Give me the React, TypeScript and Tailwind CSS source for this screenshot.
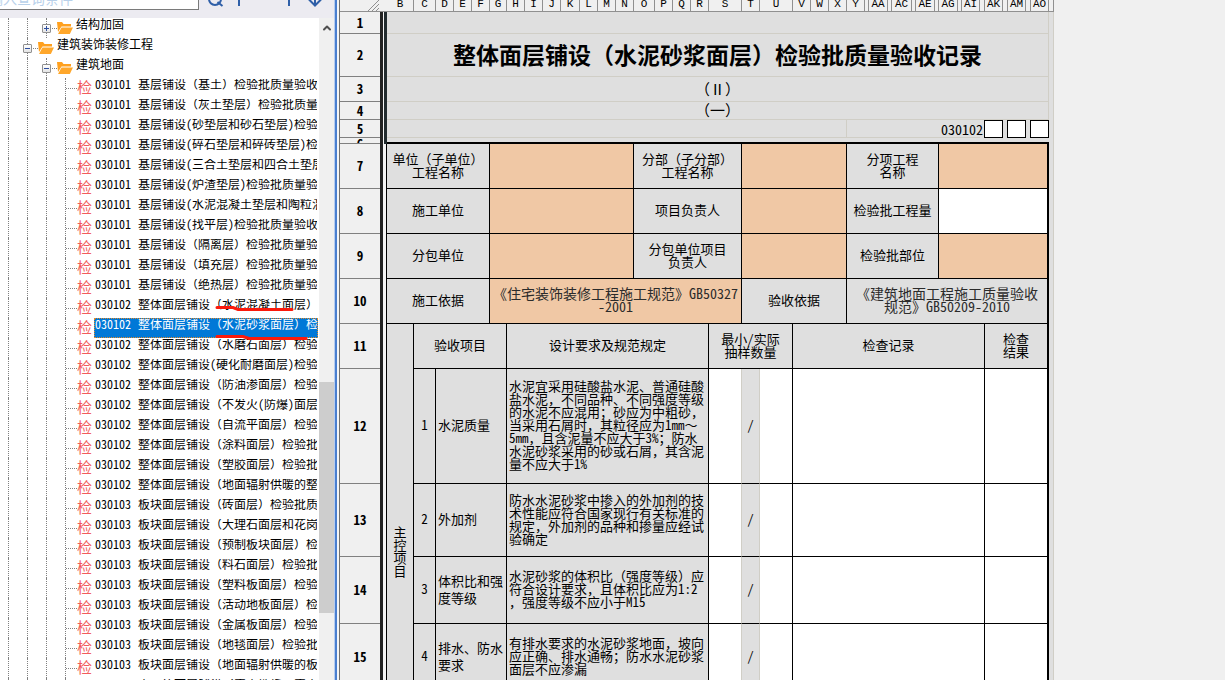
import React, { useState } from 'react';
import { ChevronUp } from 'lucide-react';

type FolderNode = { label: string; level: 1 | 2; open: boolean };

const folders: FolderNode[] = [
  { label: '结构加固', level: 2, open: false },
  { label: '建筑装饰装修工程', level: 1, open: true },
  { label: '建筑地面', level: 2, open: true },
];

const forms = [
  '030101 基层铺设（基土）检验批质量验收记录',
  '030101 基层铺设（灰土垫层）检验批质量验收记录',
  '030101 基层铺设(砂垫层和砂石垫层)检验批质量验收记录',
  '030101 基层铺设(碎石垫层和碎砖垫层)检验批质量验收记录',
  '030101 基层铺设(三合土垫层和四合土垫层)检验批质量验收记录',
  '030101 基层铺设(炉渣垫层)检验批质量验收记录',
  '030101 基层铺设(水泥混凝土垫层和陶粒混凝土垫层)检验批质量验收记录',
  '030101 基层铺设(找平层)检验批质量验收记录',
  '030101 基层铺设（隔离层）检验批质量验收记录',
  '030101 基层铺设（填充层）检验批质量验收记录',
  '030101 基层铺设（绝热层）检验批质量验收记录',
  '030102 整体面层铺设（水泥混凝土面层）',
  '030102 整体面层铺设（水泥砂浆面层）检验批质量验收记录',
  '030102 整体面层铺设（水磨石面层）检验批质量验收记录',
  '030102 整体面层铺设(硬化耐磨面层)检验批质量验收记录',
  '030102 整体面层铺设（防油渗面层）检验批质量验收记录',
  '030102 整体面层铺设（不发火(防爆)面层）检验批质量验收记录',
  '030102 整体面层铺设（自流平面层）检验批质量验收记录',
  '030102 整体面层铺设（涂料面层）检验批质量验收记录',
  '030102 整体面层铺设（塑胶面层）检验批质量验收记录',
  '030102 整体面层铺设（地面辐射供暖的整体面层）检验批质量验收记录',
  '030103 板块面层铺设（砖面层）检验批质量验收记录',
  '030103 板块面层铺设（大理石面层和花岗石面层）检验批质量验收记录',
  '030103 板块面层铺设（预制板块面层）检验批质量验收记录',
  '030103 板块面层铺设（料石面层）检验批质量验收记录',
  '030103 板块面层铺设（塑料板面层）检验批质量验收记录',
  '030103 板块面层铺设（活动地板面层）检验批质量验收记录',
  '030103 板块面层铺设（金属板面层）检验批质量验收记录',
  '030103 板块面层铺设（地毯面层）检验批质量验收记录',
  '030103 板块面层铺设（地面辐射供暖的板块面层）检验批质量验收记录',
  '030104 木、竹面层铺设（实木地板、实木集成地板）检验批质量验收记录',
];

// [letter, width]; hidden columns keep an empty letter
const columns: [string, number][] = [
  ['B', 27], ['C', 22], ['D', 18], ['E', 18], ['F', 18], ['G', 17], ['H', 18], ['I', 18],
  ['J', 18], ['K', 19], ['L', 18], ['M', 18], ['N', 18], ['O', 21], ['P', 18], ['Q', 18],
  ['R', 18], ['S', 33], ['T', 18], ['U', 33], ['V', 18], ['W', 18], ['X', 18], ['Y', 18],
  ['', 4], ['AA', 19], ['', 4], ['AC', 20], ['', 4], ['AE', 19], ['', 4], ['AG', 19],
  ['', 4], ['AI', 18], ['', 5], ['AK', 18], ['', 5], ['AM', 18], ['', 5], ['AO', 18], ['', 5],
];

const checks = [
  {
    row: 12,
    height: 'h-[115px]',
    no: 1,
    name: '水泥质量',
    rule: ['水泥宜采用硅酸盐水泥、普通硅酸', '盐水泥，不同品种、不同强度等级', '的水泥不应混用；砂应为中粗砂，', '当采用石屑时，其粒径应为1mm～', '5mm，且含泥量不应大于3%；防水', '水泥砂浆采用的砂或石屑，其含泥', '量不应大于1%'],
  },
  {
    row: 13,
    height: 'h-[73px]',
    no: 2,
    name: '外加剂',
    rule: ['防水水泥砂浆中掺入的外加剂的技', '术性能应符合国家现行有关标准的', '规定，外加剂的品种和掺量应经试', '验确定'],
  },
  {
    row: 14,
    height: 'h-[67px]',
    no: 3,
    name: '体积比和强度等级',
    rule: ['水泥砂浆的体积比（强度等级）应', '符合设计要求，且体积比应为1:2', '，强度等级不应小于M15'],
  },
  {
    row: 15,
    height: 'h-[67px]',
    no: 4,
    name: '排水、防水要求',
    rule: ['有排水要求的水泥砂浆地面，坡向', '应正确、排水通畅；防水水泥砂浆', '面层不应渗漏'],
  },
];

function FolderIcon() {
  return (
    <svg width="16" height="14" viewBox="0 0 16 14" className="shrink-0" aria-hidden="true">
      <path d="M0 1h5l1.5 2H14v2.5H4.5L1 11z" fill="#ffa01e" />
      <path d="M4.5 6.5H16L12.8 13H1z" fill="#ffa72b" />
    </svg>
  );
}

function Expander({ open }: { open: boolean }) {
  return (
    <button
      aria-label={open ? '折叠' : '展开'}
      className="absolute -left-[5px] top-[6px] h-[9px] w-[9px] rounded-[1px] border border-[#919191] bg-gradient-to-b from-white to-[#e4e4e4]"
    >
      <svg viewBox="0 0 7 7" width="7" height="7" className="block" shapeRendering="crispEdges">
        <path d={open ? 'M1 3h5v1H1z' : 'M1 3h5v1H1zM3 1h1v5H3z'} fill="#2f4f9e" />
      </svg>
    </button>
  );
}

function Guides({ count }: { count: number }) {
  return (
    <>
      {Array.from({ length: count }, (_, i) => (
        <span key={i} className="w-[19px] shrink-0 border-l border-dotted border-[#808080]" />
      ))}
    </>
  );
}

function Toolbar() {
  return (
    <div className="flex h-[18px] shrink-0 items-end overflow-hidden bg-[#ecebf1] pb-2">
      <input
        aria-label="输入查询条件"
        placeholder="输入查询条件"
        className="-ml-4 h-6 w-[215px] shrink-0 border border-[#7a7a7a] bg-white px-1 text-[14px] placeholder:text-[#b9d1ea]"
      />
      <button aria-label="查询" className="ml-2">
        <svg width="18" height="18" viewBox="0 0 18 18" fill="none" stroke="#2f5fa8" strokeWidth="2">
          <circle cx="8" cy="7" r="6" />
          <path d="M10.500 10l5 4" />
        </svg>
      </button>
      <button aria-label="向上" className="ml-[6px]">
        <svg width="18" height="18" viewBox="0 0 18 18" fill="none" stroke="#2f5fa8" strokeWidth="2">
          <path d="M8 14V0M3 6l5-5.500L13 6" />
        </svg>
      </button>
      <button aria-label="顶部" className="ml-8">
        <svg width="18" height="18" viewBox="0 0 18 18" fill="none" stroke="#2f5fa8" strokeWidth="2">
          <path d="M8 14V0M3 6l5-5.500L13 6" />
        </svg>
      </button>
      <button aria-label="向下" className="ml-2">
        <svg width="18" height="18" viewBox="0 0 18 18" fill="none" stroke="#2f5fa8" strokeWidth="2">
          <path d="M8 0v13M2 7.500l6 6 6-6" />
        </svg>
      </button>
    </div>
  );
}

function FormTree() {
  const [selected, setSelected] = useState(12);

  return (
    <div className="flex min-h-0 flex-1 bg-white">
      <div className="relative min-w-0 flex-1 overflow-hidden pr-px text-[12px] leading-[13px]">
        <ul>
          {folders.map((node) => (
            <li key={node.label} className="flex h-5 whitespace-nowrap pl-2">
              <Guides count={node.level} />
              <span className="relative flex w-[11px] shrink-0 items-center border-l border-dotted border-[#808080]">
                <span className="flex-1 border-t border-dotted border-[#808080]" />
                <Expander open={node.open} />
              </span>
              <span className="flex items-center">
                <FolderIcon />
              </span>
              <span className="-mt-px ml-[3px]">{node.label}</span>
            </li>
          ))}
          {forms.map((label, i) => (
            <li key={label} className="flex h-5 whitespace-nowrap pl-2">
              <Guides count={3} />
              <span className="flex w-3 shrink-0 items-center border-l border-dotted border-[#808080]">
                <span className="flex-1 border-t border-dotted border-[#808080]" />
              </span>
              <span className="w-[17px] shrink-0 text-[15px] leading-[18px] text-[#f25c5c]">检</span>
              <button
                onClick={() => setSelected(i)}
                className={`flex h-5 flex-1 items-start overflow-hidden border border-dotted text-left whitespace-pre ${
                  i === selected ? 'border-[#e08a2c] bg-[#0078d7] text-white' : 'border-transparent'
                }`}
              >
                <span className="-mt-[2px] w-[43px] shrink-0">{label.slice(0, 6)}</span>
                <span className="-mt-[2px]">{label.slice(7)}</span>
              </button>
            </li>
          ))}
        </ul>
        {/* red marker strokes */}
        <svg className="pointer-events-none absolute left-[214px] top-[285px]" width="100" height="40" fill="none" stroke="#fb1a0c" strokeWidth="3" strokeLinecap="round">
          <path d="M3 4.500h16l5 2h54" />
          <path d="M3 33.500h26l6 2h57" />
        </svg>
      </div>
      {/* Scrollbar */}
      <div className="flex w-[15px] flex-col items-center bg-[#f0f0f0]">
        <ChevronUp size={12} strokeWidth={4} className="mt-1 shrink-0 text-[#505050]" />
        <div className="mt-[348px] h-[231px] w-full bg-[#cdcdcd]" />
      </div>
    </div>
  );
}

function RowHead({ n, height, top }: { n: number; height: string; top?: boolean }) {
  return (
    <>
      <th
        scope="row"
        className={`${height} border-b border-[#808080] bg-[#f0f0f0] p-0 text-[13px] font-bold leading-3`}
      >
        {n === 6 ? <span className="block h-[5px] overflow-hidden leading-3">{n}</span> : n}
      </th>
      <td className={`border-l-[3px] border-l-[#222] bg-[#f4f4f4] p-0 ${top ? 'border-r-[3px] border-r-[#222b2e]' : 'border-r border-r-black'}`} />
    </>
  );
}

interface CellProps {
  span?: number;
  rows?: number;
  tone?: 'gray' | 'peach' | 'white';
  align?: 'center' | 'left';
  last?: boolean;
  children?: React.ReactNode;
}

const tones = { gray: 'bg-[#dfdfdf]', peach: 'bg-[#f0c8a5]', white: 'bg-white' };

function Cell({ span = 1, rows = 1, tone = 'gray', align = 'center', last, children }: CellProps) {
  return (
    <td
      colSpan={span}
      rowSpan={rows}
      className={`border-b border-black px-0 pt-0 pb-[3px] leading-[13px] ${last ? 'border-r-2' : 'border-r'} ${tones[tone]} ${align === 'left' ? 'pl-[2px] text-left' : 'text-center'}`}
    >
      {children}
    </td>
  );
}

function Edge() {
  return <td className="border-r border-[#d0cec6] bg-[#dfdfdf] p-0" />;
}

// Plain row above the bordered form
function TitleRow({ n, height, children }: { n: number; height: string; children?: React.ReactNode }) {
  return (
    <tr>
      <RowHead n={n} height={height} top />
      <td colSpan={40} className="border-b border-r border-[#d0cec6] bg-[#dfdfdf] p-0 text-center">
        {children}
      </td>
      <Edge />
    </tr>
  );
}

// The spacer column carries the left side of each box
function CodeBox() {
  return (
    <>
      <td className="border-r border-black bg-[#dfdfdf] p-0" />
      <td className="border-y border-r border-black bg-white p-0" />
    </>
  );
}

function Sheet() {
  return (
    <table className="w-[714px] shrink-0 table-fixed border-separate border-spacing-0 self-start text-[13px]">
      <colgroup>
        <col className="w-[40px]" />
        <col className="w-[7px]" />
        {columns.map(([, width], i) => (
          <col key={i} style={{ width }} />
        ))}
      </colgroup>
      <thead>
        <tr>
          <td className="h-3 border-b border-[#909090] bg-[#f0f0f0] p-0">
            <svg width="12" height="11" viewBox="0 0 12 11" className="ml-auto block" stroke="#909090">
              <path d="M0 11L11 0M4 11l7-7M8 11l3-3" />
            </svg>
          </td>
          <td className="border-b border-[#909090] bg-[#f0f0f0] p-0" />
          {columns.map(([letter], i) => (
            <th
              key={i}
              scope="col"
              className="overflow-hidden whitespace-nowrap border-b border-r border-[#909090] bg-[#f0f0f0] p-0 align-top font-['Liberation_Mono',monospace] text-[11px] font-normal leading-[9px]"
            >
              <span className="flex justify-center">{letter}</span>
            </th>
          ))}
        </tr>
      </thead>
      <tbody>
        <TitleRow n={1} height="h-[22px]" />
        <TitleRow n={2} height="h-[43px]">
          <h1 className="whitespace-nowrap pb-[2px] text-[23px] font-bold leading-8">
            整体面层铺设（水泥砂浆面层）检验批质量验收记录
          </h1>
        </TitleRow>
        <TitleRow n={3} height="h-[25px]">
          <p className="text-[15px] leading-5">（Ⅱ）</p>
        </TitleRow>
        <TitleRow n={4} height="h-[18px]">
          <p className="pb-[2px] text-[15px] leading-[14px]">（一）</p>
        </TitleRow>
        <tr>
          <RowHead n={5} height="h-[18px]" top />
          <td colSpan={23} className="border-b border-r border-[#d0cec6] bg-[#dfdfdf] p-0" />
          <td colSpan={11} className="border-b border-[#d0cec6] bg-[#dfdfdf] p-0 text-right text-[14px] leading-4">
            <span className="-mr-[3px]">030102</span>
          </td>
          <CodeBox />
          <CodeBox />
          <CodeBox />
          <Edge />
        </tr>
        <tr>
          <RowHead n={6} height="h-[6px]" top />
          <td colSpan={40} className="border-b-2 border-black bg-[#dfdfdf] p-0" />
          <Edge />
        </tr>
        <tr>
          <RowHead n={7} height="h-[45px]" />
          <Cell span={5}>单位（子单位）<br />工程名称</Cell>
          <Cell span={8} tone="peach" />
          <Cell span={5}>分部（子分部）<br />工程名称</Cell>
          <Cell span={5} tone="peach" />
          <Cell span={8}>分项工程<br />名称</Cell>
          <Cell span={9} tone="peach" last />
          <Edge />
        </tr>
        <tr>
          <RowHead n={8} height="h-[45px]" />
          <Cell span={5}>施工单位</Cell>
          <Cell span={8} tone="peach" />
          <Cell span={5}>项目负责人</Cell>
          <Cell span={5} tone="peach" />
          <Cell span={8}>检验批工程量</Cell>
          <Cell span={9} tone="white" last />
          <Edge />
        </tr>
        <tr>
          <RowHead n={9} height="h-[45px]" />
          <Cell span={5}>分包单位</Cell>
          <Cell span={8} tone="peach" />
          <Cell span={5}>分包单位项目<br />负责人</Cell>
          <Cell span={5} tone="peach" />
          <Cell span={8}>检验批部位</Cell>
          <Cell span={9} tone="peach" last />
          <Edge />
        </tr>
        <tr>
          <RowHead n={10} height="h-[45px]" />
          <Cell span={5}>施工依据</Cell>
          <Cell span={13} tone="peach">
            <span className="whitespace-nowrap text-[14px] text-[#2b2b2b]">《住宅装饰装修工程施工规范》GB50327<br />-2001</span>
          </Cell>
          <Cell span={5}>验收依据</Cell>
          <Cell span={17} last>
            <span className="whitespace-nowrap text-[14px] text-[#2b2b2b]">《建筑地面工程施工质量验收<br />规范》GB50209-2010</span>
          </Cell>
          <Edge />
        </tr>
        <tr>
          <RowHead n={11} height="h-[45px]" />
          <Cell rows={6}>
            <span className="mx-auto block w-[13px]">主控项目</span>
          </Cell>
          <Cell span={5}>验收项目</Cell>
          <Cell span={11}>设计要求及规范规定</Cell>
          <Cell span={3}>最小/实际<br />抽样数量</Cell>
          <Cell span={15}>检查记录</Cell>
          <Cell span={5} last>检查<br />结果</Cell>
          <Edge />
        </tr>
        {checks.map((item) => (
          <tr key={item.row}>
            <RowHead n={item.row} height={item.height} />
            <Cell>{item.no}</Cell>
            <Cell span={4} align="left">
              <span className="block leading-[17px]">{item.name}</span>
            </Cell>
            <Cell span={11} align="left">
              {item.rule.map((line) => (
                <span key={line} className="block whitespace-nowrap">{line}</span>
              ))}
            </Cell>
            <td className="border-b border-r border-b-black border-r-[#d0cec6] bg-white p-0" />
            <td className="border-b border-r border-b-black border-r-[#d0cec6] bg-[#dfdfdf] px-0 pt-0 pb-[3px] text-center leading-[13px]">/</td>
            <Cell tone="white" />
            <Cell span={15} tone="white" />
            <Cell span={5} tone="white" last />
            <Edge />
          </tr>
        ))}
        <tr>
          <RowHead n={16} height="h-[90px]" />
          <Cell>5</Cell>
          <Cell span={4} />
          <Cell span={11} />
          <Cell tone="white" />
          <Cell />
          <Cell tone="white" />
          <Cell span={15} tone="white" />
          <Cell span={5} tone="white" last />
          <Edge />
        </tr>
      </tbody>
    </table>
  );
}

export default function App() {
  return (
    <div className="flex h-screen overflow-hidden bg-[#f0f0f0] font-['Noto_Sans_Mono_CJK_SC','Noto_Sans_CJK_SC',sans-serif] text-black">
      <aside className="flex w-[334px] shrink-0 flex-col">
        <Toolbar />
        <FormTree />
      </aside>
      {/* Splitter */}
      <div className="flex w-[6px] shrink-0 bg-[#f6f6f6]">
        <div className="w-[3px] border-l border-[#b8cdee] bg-[#4a7fd0]" />
        <div className="ml-auto w-px bg-[#707070]" />
      </div>
      <main className="min-w-0 flex-1 overflow-hidden">
        <Sheet />
      </main>
    </div>
  );
}
